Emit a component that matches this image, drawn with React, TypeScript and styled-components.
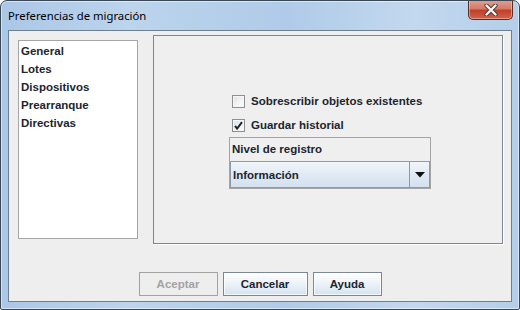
import React from 'react'
import styled, { createGlobalStyle } from 'styled-components'

const Global = createGlobalStyle`
    html, body { margin: 0; padding: 0; background: #fff; }
    body { font-family: "Liberation Sans", Arial, sans-serif; }
`

const sections = ['General', 'Lotes', 'Dispositivos', 'Prearranque', 'Directivas']

function CheckBox({ checked, label }: { checked?: boolean, label: string }) {
    return <CheckRow>
        <Box>
            {checked && <svg width="11" height="11" viewBox="0 0 11 11">
                <path d="M2 5.8 L4.1 8.6 L9 2.2" fill="none" stroke="#1c2630" strokeWidth="2" />
            </svg>}
        </Box>
        <span>{label}</span>
    </CheckRow>
}

export default function App() {
    return <>
        <Global />
        <Window>
            <TitleBar>
                <Title>Preferencias de migración</Title>
                <CloseButton>
                    <svg width="16" height="12" viewBox="0 0 16 12">
                        <path d="M3.5 1.5 L12.5 10.5 M12.5 1.5 L3.5 10.5" stroke="#4a3a3a" strokeWidth="4.2" strokeLinecap="round" />
                        <path d="M3.5 1.5 L12.5 10.5 M12.5 1.5 L3.5 10.5" stroke="#f4f4f4" strokeWidth="2.4" strokeLinecap="round" />
                    </svg>
                </CloseButton>
            </TitleBar>
            <Client>
                <Main>
                    <List>
                        {sections.map(s => <ListItem key={s}>{s}</ListItem>)}
                    </List>
                    <Panel>
                        <Options>
                            <CheckBox label="Sobrescribir objetos existentes" />
                            <CheckBox checked label="Guardar historial" />
                            <Group>
                                <GroupLabel>Nivel de registro</GroupLabel>
                                <Combo>
                                    <ComboValue>Información</ComboValue>
                                    <ComboArrow>
                                        <svg width="10" height="6" viewBox="0 0 10 6">
                                            <path d="M0 0 H10 L5 5.5 Z" fill="#111" />
                                        </svg>
                                    </ComboArrow>
                                </Combo>
                            </Group>
                        </Options>
                    </Panel>
                </Main>
                <Buttons>
                    <Button disabled w={79}>Aceptar</Button>
                    <Button w={85}>Cancelar</Button>
                    <Button w={69}>Ayuda</Button>
                </Buttons>
            </Client>
        </Window>
    </>
}

const Window = styled.div`
    width: 520px;
    height: 310px;
    box-sizing: border-box;
    border: 1px solid #3a4756;
    border-radius: 7px 7px 2px 2px;
    background: linear-gradient(90deg, #abc7e6 0%, #bcd4ec 25%, #b0cbe8 55%, #c2d8ee 80%, #b4cee9 100%);
    box-shadow: inset 0 0 0 1px rgba(255,255,255,0.5);
    display: flex;
    flex-direction: column;
    overflow: hidden;
`
const TitleBar = styled.div`
    height: 29px;
    display: flex;
    align-items: center;
    padding-left: 7px;
`
const Title = styled.div`
    font-family: "Noto Sans", "Open Sans", sans-serif;
    font-size: 11.3px;
    color: #000;
    margin-top: -1px;
`
const CloseButton = styled.div`
    margin-left: auto;
    margin-right: 6px;
    align-self: flex-start;
    margin-top: -1px;
    width: 45px;
    height: 20px;
    box-sizing: border-box;
    border: 1px solid #5b2b26;
    border-top: none;
    border-radius: 0 0 5px 5px;
    background: linear-gradient(180deg, #e4a08f 0%, #d47b68 45%, #c23f2b 55%, #cf634b 100%);
    box-shadow: inset 0 0 0 1px rgba(255,220,210,0.45);
    display: flex;
    align-items: center;
    justify-content: center;
`
const Client = styled.div`
    flex: 1;
    margin: 0 7px 7px 7px;
    border: 1px solid #6e7f91;
    background: #eeeeee;
    display: flex;
    flex-direction: column;
    font-size: 11.5px;
    font-weight: bold;
    color: #1b2530;
`
const Main = styled.div`
    display: flex;
    align-items: flex-start;
`
const List = styled.div`
    margin: 9px 0 0 9px;
    width: 120px;
    height: 199px;
    box-sizing: border-box;
    background: #fff;
    border: 1px solid #a5a5a5;
    padding: 1px 0 0 2px;
`
const ListItem = styled.div`
    height: 18px;
    line-height: 18px;
`
const Panel = styled.div`
    margin: 4px 0 0 15px;
    width: 350px;
    height: 209px;
    box-sizing: border-box;
    border: 1px solid #7c8795;
    box-shadow: 1px 1px 0 #fff;
    background: #efefef;
    display: flex;
    align-items: center;
    justify-content: center;
    padding: 0 0 1px 4px;
`
const Options = styled.div`
    width: 202px;
    display: flex;
    flex-direction: column;
`
const CheckRow = styled.div`
    height: 24px;
    display: flex;
    align-items: center;
    gap: 6px;
    padding-left: 3px;
    white-space: nowrap;
`
const Box = styled.div`
    width: 13px;
    height: 13px;
    box-sizing: border-box;
    border: 1px solid #8e8f8f;
    background: linear-gradient(135deg, #dcdee1 0%, #f4f5f6 60%, #fcfcfc 100%);
    box-shadow: inset 0 0 0 1px #f6f6f6;
    display: flex;
    align-items: center;
    justify-content: center;
`
const Group = styled.div`
    height: 52px;
    box-sizing: border-box;
    border: 1px solid #a4a4a4;
    display: flex;
    flex-direction: column;
`
const GroupLabel = styled.div`
    height: 23px;
    line-height: 23px;
    padding-left: 2px;
`
const Combo = styled.div`
    height: 27px;
    box-sizing: border-box;
    border: 1px solid #8f9aa6;
    background: linear-gradient(180deg, #f0f5fa 0%, #e1eaf4 50%, #d3e1ef 100%);
    display: flex;
    align-items: stretch;
`
const ComboValue = styled.div`
    flex: 1;
    display: flex;
    align-items: center;
    padding-left: 2px;
`
const ComboArrow = styled.div`
    width: 19px;
    border-left: 1px solid #8f9aa6;
    display: flex;
    align-items: center;
    justify-content: center;
`
const Buttons = styled.div`
    margin-top: 28px;
    display: flex;
    justify-content: center;
    gap: 5px;
`
const Button = styled.div<{ disabled?: boolean, w: number }>`
    width: ${p => p.w}px;
    height: 24px;
    box-sizing: border-box;
    display: flex;
    align-items: center;
    justify-content: center;
    border: 1px solid ${p => p.disabled ? '#a3a3a3' : '#7a8896'};
    background: ${p => p.disabled ? '#eeeeee' : 'linear-gradient(180deg, #ffffff 0%, #eef3f9 45%, #d5e2ef 100%)'};
    color: ${p => p.disabled ? '#a3a3a3' : '#1b2530'};
    box-shadow: ${p => p.disabled ? 'none' : 'inset 0 0 0 1px rgba(255,255,255,0.7)'};
`
